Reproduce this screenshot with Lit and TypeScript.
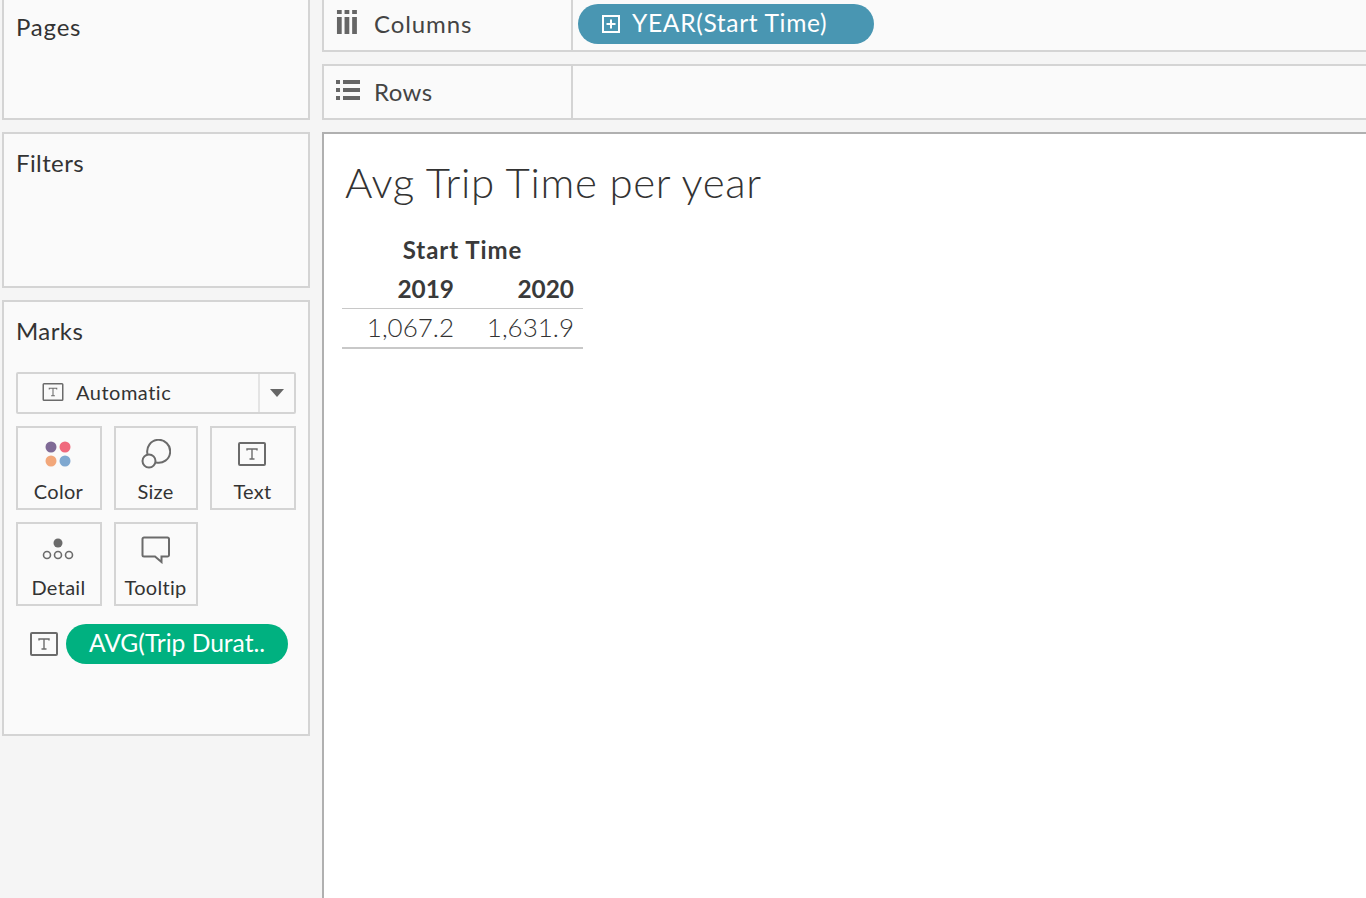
import { LitElement, html, css, svg } from "lit";
import { customElement } from "lit/decorators.js";

const tIcon = (w: number, h: number) => html`
  <svg width=${w} height=${h} viewBox="0 0 28 24" fill="none">
    <rect x="1" y="1" width="26" height="22" rx="1" stroke="#6b6b6b" stroke-width="2"/>
    <path d="M9 8.500V7h10v1.500M14 7v10M11.500 17h5" stroke="#6b6b6b" stroke-width="1.400"/>
  </svg>`;

const icons: Record<string, unknown> = {
  Color: svg`<svg width="28" height="28" viewBox="0 0 28 28">
    <circle cx="7" cy="7" r="5.500" fill="#7f6a96"/><circle cx="21" cy="7" r="5.500" fill="#f0697d"/>
    <circle cx="7" cy="21" r="5.500" fill="#f2a77a"/><circle cx="21" cy="21" r="5.500" fill="#7fa8d0"/></svg>`,
  Size: svg`<svg width="30" height="30" viewBox="0 0 30 30" fill="none" stroke="#6b6b6b" stroke-width="2">
    <path d="M6.500 15A11.500 11.500 0 1 1 15 23.500"/><circle cx="8" cy="22" r="6.500"/></svg>`,
  Text: tIcon(28, 24),
  Detail: svg`<svg width="32" height="24" viewBox="0 0 32 24" fill="none" stroke="#6b6b6b" stroke-width="1.600">
    <circle cx="16" cy="5" r="4.500" fill="#6b6b6b" stroke="none"/>
    <circle cx="5" cy="17" r="3.500"/><circle cx="16" cy="17" r="3.500"/><circle cx="27" cy="17" r="3.500"/></svg>`,
  Tooltip: svg`<svg width="30" height="28" viewBox="0 0 30 28" fill="none" stroke="#6b6b6b" stroke-width="2">
    <path d="M3 1.500H26.500A1.500 1.500 0 0 1 28 3V19A1.500 1.500 0 0 1 26.500 20.500H20.500V26L14 20.500H3A1.500 1.500 0 0 1 1.500 19V3A1.500 1.500 0 0 1 3 1.500Z"/></svg>`,
};

@customElement("app-root")
export class AppRoot extends LitElement {
  static styles = css`
    :host {
      display: grid;
      grid-template-columns: 308px 1fr;
      column-gap: 12px;
      height: 898px;
      padding-left: 2px;
      box-sizing: border-box;
      background: #f5f5f5;
      font-family: Lato, "Open Sans", sans-serif;
      color: #333;
      overflow: hidden;
    }
    .side, .main-col { display: flex; flex-direction: column; gap: 12px; min-width: 0; }
    .card {
      box-sizing: border-box;
      border: 2px solid #d4d4d4;
      background: #fafafa;
      padding: 0 12px;
      font-size: 24px;
    }
    .card h2 { margin: 0; font: inherit; line-height: 30px; letter-spacing: 0.4px; }
    .pages { height: 120px; border-top: none; padding-top: 12px; }
    .pages h2 { letter-spacing: 0.8px; }
    .filters { height: 156px; padding-top: 14px; }
    .marks { height: 436px; padding-top: 14px; }
    .dropdown {
      display: flex;
      align-items: center;
      height: 42px;
      margin-top: 26px;
      box-sizing: border-box;
      border: 2px solid #d4d4d4;
      border-radius: 2px;
      font-size: 20px;
      letter-spacing: 0.5px;
    }
    .dropdown .val { flex: 1; display: flex; align-items: center; gap: 12px; padding: 0 0 2px 24px; }
    .dropdown .arrow {
      width: 36px;
      height: 100%;
      box-sizing: border-box;
      border-left: 2px solid #e4e4e4;
      display: flex;
      align-items: center;
      justify-content: center;
    }
    .dropdown .arrow i {
      border-left: 7px solid transparent;
      border-right: 7px solid transparent;
      border-top: 8px solid #666;
    }
    .btns {
      display: grid;
      grid-template-columns: 86px 84px 86px;
      grid-auto-rows: 84px;
      gap: 12px;
      margin-top: 12px;
    }
    .btn {
      box-sizing: border-box;
      border: 2px solid #d4d4d4;
      display: flex;
      flex-direction: column;
      align-items: center;
      font-size: 20px;
      letter-spacing: 0.3px;
      color: #333;
    }
    .btn .ic { height: 46px; display: flex; align-items: center; justify-content: center; margin-top: 3px; }
    .btn .ic.Color, .btn .ic.Text, .btn .ic.Detail { padding-right: 2px; }
    .btn .lb { line-height: 28px; padding-right: 1px; }
    .mark-pill { display: flex; align-items: center; gap: 8px; margin: 18px 8px 0 14px; }
    .pill {
      border-radius: 20px;
      height: 40px;
      color: #fff;
      font-size: 24.6px;
      line-height: 38px;
      white-space: nowrap;
    }
    .pill.green { flex: 1; background: #00b180; text-align: center; }
    .pill.blue {
      width: 296px;
      background: #4996b2;
      display: flex;
      align-items: center;
      gap: 12px;
      padding-left: 24px;
      box-sizing: border-box;
      letter-spacing: 0.65px;
      margin-top: -2px;
    }
    .pill.blue span { margin-top: -2px; }
    .shelf {
      box-sizing: border-box;
      border: 2px solid #d4d4d4;
      border-right: none;
      background: #fafafa;
      display: flex;
      font-size: 24px;
    }
    .shelf.cols { height: 52px; border-top: none; }
    .shelf.rows { height: 56px; }
    .shelf .name {
      width: 249px;
      flex: none;
      display: flex;
      align-items: center;
      gap: 14px;
      padding-left: 12px;
      box-sizing: border-box;
      border-right: 2px solid #d4d4d4;
      color: #444;
      letter-spacing: 0.9px;
    }
    .shelf.cols .name { padding-bottom: 4px; }
    .shelf.rows .name { padding-bottom: 2px; letter-spacing: 0.4px; }
    .shelf .name svg { flex: none; margin-bottom: 2px; }
    .shelf .body { flex: 1; display: flex; align-items: center; padding-left: 5px; }
    .view {
      flex: 1;
      border-left: 2px solid #b0b0b0;
      border-top: 2px solid #b0b0b0;
      background: #fff;
      padding: 20px 0 0 21px;
    }
    .view h1 {
      margin: 0;
      font-family: Lato, sans-serif;
      font-weight: 300;
      font-size: 42px;
      line-height: 56px;
      letter-spacing: 0.64px;
      color: #333;
    }
    .table { width: 241px; margin: 20px 0 0 -3px; }
    .th-top {
      text-align: center;
      font-size: 24px;
      font-weight: 700;
      letter-spacing: 0.95px;
      line-height: 40px;
      height: 40px;
      color: #3a3a3a;
    }
    .tr { display: grid; grid-template-columns: 121px 120px; text-align: right; font-size: 26px; }
    .tr span { padding-right: 9px; }
    .tr.head {
      font-size: 24.4px;
      font-weight: 700;
      height: 38px;
      line-height: 38px;
      border-bottom: 1px solid #c8c8c8;
      color: #3a3a3a;
    }
    .tr.data { height: 38px; line-height: 36px; border-bottom: 2px solid #c8c8c8; font-weight: 300; color: #333; }
  `;

  render() {
    const rows = ["Color", "Size", "Text", "Detail", "Tooltip"];
    return html`
      <div class="side">
        <div class="card pages"><h2>Pages</h2></div>
        <div class="card filters"><h2>Filters</h2></div>
        <div class="card marks">
          <h2>Marks</h2>
          <div class="dropdown">
            <div class="val">${tIcon(22, 18)}<span>Automatic</span></div>
            <div class="arrow"><i></i></div>
          </div>
          <div class="btns">
            ${rows.map(r => html`
              <div class="btn"><div class="ic ${r}">${icons[r]}</div><div class="lb">${r}</div></div>
            `)}
          </div>
          <div class="mark-pill">
            ${tIcon(28, 24)}
            <div class="pill green">AVG(Trip Durat..</div>
          </div>
        </div>
      </div>
      <div class="main-col">
        <div class="shelf cols">
          <div class="name">
            <svg width="24" height="24" viewBox="0 0 24 24" fill="#666">
              <path d="M1 0h5v4H1zM1 7h5v17H1zM9 0h5v4H9zM9 7h5v17H9zM17 0h5v4h-5zM17 7h5v17h-5z" transform="scale(.95 1)"/>
            </svg>
            <span>Columns</span>
          </div>
          <div class="body">
            <div class="pill blue">
              <svg width="18" height="18" viewBox="0 0 18 18" fill="none" stroke="#fff" stroke-width="2">
                <rect x="1" y="1" width="16" height="16"/><path d="M9 4.500v9M4.500 9h9"/>
              </svg>
              <span>YEAR(Start Time)</span>
            </div>
          </div>
        </div>
        <div class="shelf rows">
          <div class="name">
            <svg width="24" height="20" viewBox="0 0 24 20" fill="#666">
              <path d="M0 0h4v4H0zM7 0h17v4H7zM0 8h4v4H0zM7 8h17v4H7zM0 16h4v4H0zM7 16h17v4H7z"/>
            </svg>
            <span>Rows</span>
          </div>
          <div class="body"></div>
        </div>
        <div class="view">
          <h1>Avg Trip Time per year</h1>
          <div class="table">
            <div class="th-top">Start Time</div>
            <div class="tr head"><span>2019</span><span>2020</span></div>
            <div class="tr data"><span>1,067.2</span><span>1,631.9</span></div>
          </div>
        </div>
      </div>
    `;
  }
}
